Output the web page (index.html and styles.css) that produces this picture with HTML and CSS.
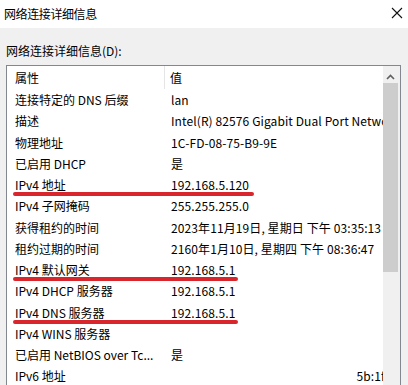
FILE: index.html
```html
<!DOCTYPE html>
<html lang="zh-CN">
<head>
<meta charset="utf-8">
<link rel="stylesheet" href="styles.css">
</head>
<body>
<div class="window">
  <div class="titlebar">
    <span class="title">网络连接详细信息</span>
    <svg class="close" width="12" height="12" viewBox="0 0 12 12"><path d="M1 1 L11 11 M11 1 L1 11" stroke="#111" stroke-width="1.1" fill="none"/></svg>
  </div>
  <div class="body">
    <div class="label">网络连接详细信息(D):</div>
    <div class="listbox">
      <div class="list">
        <div class="header">
          <div class="c1">属性</div>
          <div class="c2">值</div>
        </div>
        <div class="row"><div class="c1">连接特定的 DNS 后缀</div><div class="c2">lan</div></div>
        <div class="row"><div class="c1">描述</div><div class="c2">Intel(R) 82576 Gigabit Dual Port Network Connection</div></div>
        <div class="row"><div class="c1">物理地址</div><div class="c2">1C-FD-08-75-B9-9E</div></div>
        <div class="row"><div class="c1">已启用 DHCP</div><div class="c2">是</div></div>
        <div class="row"><div class="c1">IPv4 地址</div><div class="c2">192.168.5.120</div><span class="mark m1"></span></div>
        <div class="row"><div class="c1">IPv4 子网掩码</div><div class="c2">255.255.255.0</div></div>
        <div class="row"><div class="c1">获得租约的时间</div><div class="c2">2023年11月19日, 星期日 下午 03:35:13</div></div>
        <div class="row"><div class="c1">租约过期的时间</div><div class="c2">2160年1月10日, 星期四 下午 08:36:47</div></div>
        <div class="row"><div class="c1">IPv4 默认网关</div><div class="c2">192.168.5.1</div><span class="mark m2"></span></div>
        <div class="row"><div class="c1">IPv4 DHCP 服务器</div><div class="c2">192.168.5.1</div></div>
        <div class="row"><div class="c1">IPv4 DNS 服务器</div><div class="c2">192.168.5.1</div><span class="mark m2"></span></div>
        <div class="row"><div class="c1">IPv4 WINS 服务器</div><div class="c2"></div></div>
        <div class="row"><div class="c1">已启用 NetBIOS over Tc...</div><div class="c2">是</div></div>
        <div class="row"><div class="c1">IPv6 地址</div><div class="c2 right"><span class="tail">5b:1f</span></div></div>
      </div>
      <div class="scrollbar">
        <svg class="arrow" width="9" height="6" viewBox="0 0 9 6"><path d="M1 5 L4.5 1.5 L8 5" stroke="#606060" stroke-width="1.6" fill="none"/></svg>
        <div class="thumb"></div>
      </div>
    </div>
  </div>
</div>
</body>
</html>
```

FILE: styles.css
```css
* { box-sizing: border-box; }
html, body { margin: 0; padding: 0; }
body {
  width: 408px;
  height: 385px;
  overflow: hidden;
  font-family: "Noto Sans CJK SC", "Noto Sans", sans-serif;
  font-size: 12px;
  color: #000;
  background: #f0f0f0;
}
.window { display: flex; flex-direction: column; height: 385px; }
.titlebar {
  height: 28px;
  background: #fff;
  display: flex;
  align-items: center;
  justify-content: space-between;
  padding: 0 5px 0 4px;
}
.title { font-size: 12px; line-height: 16px; letter-spacing: -0.4px; }
.close { margin-top: -2px; }
.body {
  flex: 1;
  background: #f0f0f0;
  padding: 15px 7px 0 6px;
}
.label { line-height: 16px; height: 22px; }
.listbox {
  height: 320px;
  background: #fff;
  border: 1px solid #828790;
  border-bottom: none;
  display: flex;
  overflow: hidden;
}
.list { flex: 1; overflow: hidden; position: relative; }
.header, .row {
  display: flex;
  align-items: center;
  white-space: nowrap;
  position: relative;
}
.header { height: 23px; }
.row { height: 21.25px; }
.c1 { width: 158px; padding-left: 8px; flex: none; overflow: hidden; }
.c2 { flex: 1; padding-left: 6px; overflow: hidden; letter-spacing: 0.1px; }
.header .c1 { border-right: 1px solid #e5e5e5; height: 23px; line-height: 23px; }
.header .c2 { padding-left: 5px; }
.c2.right { text-align: right; }
.tail { display: inline-block; margin-right: -2px; }
.mark {
  position: absolute;
  left: 6px;
  height: 4px;
  background: #d9262c;
  border-radius: 2px;
  bottom: -1px;
}
.m1 { width: 241px; }
.m2 { width: 225px; }
.scrollbar {
  width: 17px;
  flex: none;
  background: #f0f0f0;
  padding: 0 2px 0 0;
  display: flex;
  flex-direction: column;
  align-items: center;
}
.arrow { margin-top: 8px; margin-bottom: 3px; }
.thumb { width: 15px; height: 189px; background: #cdcdcd; }
```
